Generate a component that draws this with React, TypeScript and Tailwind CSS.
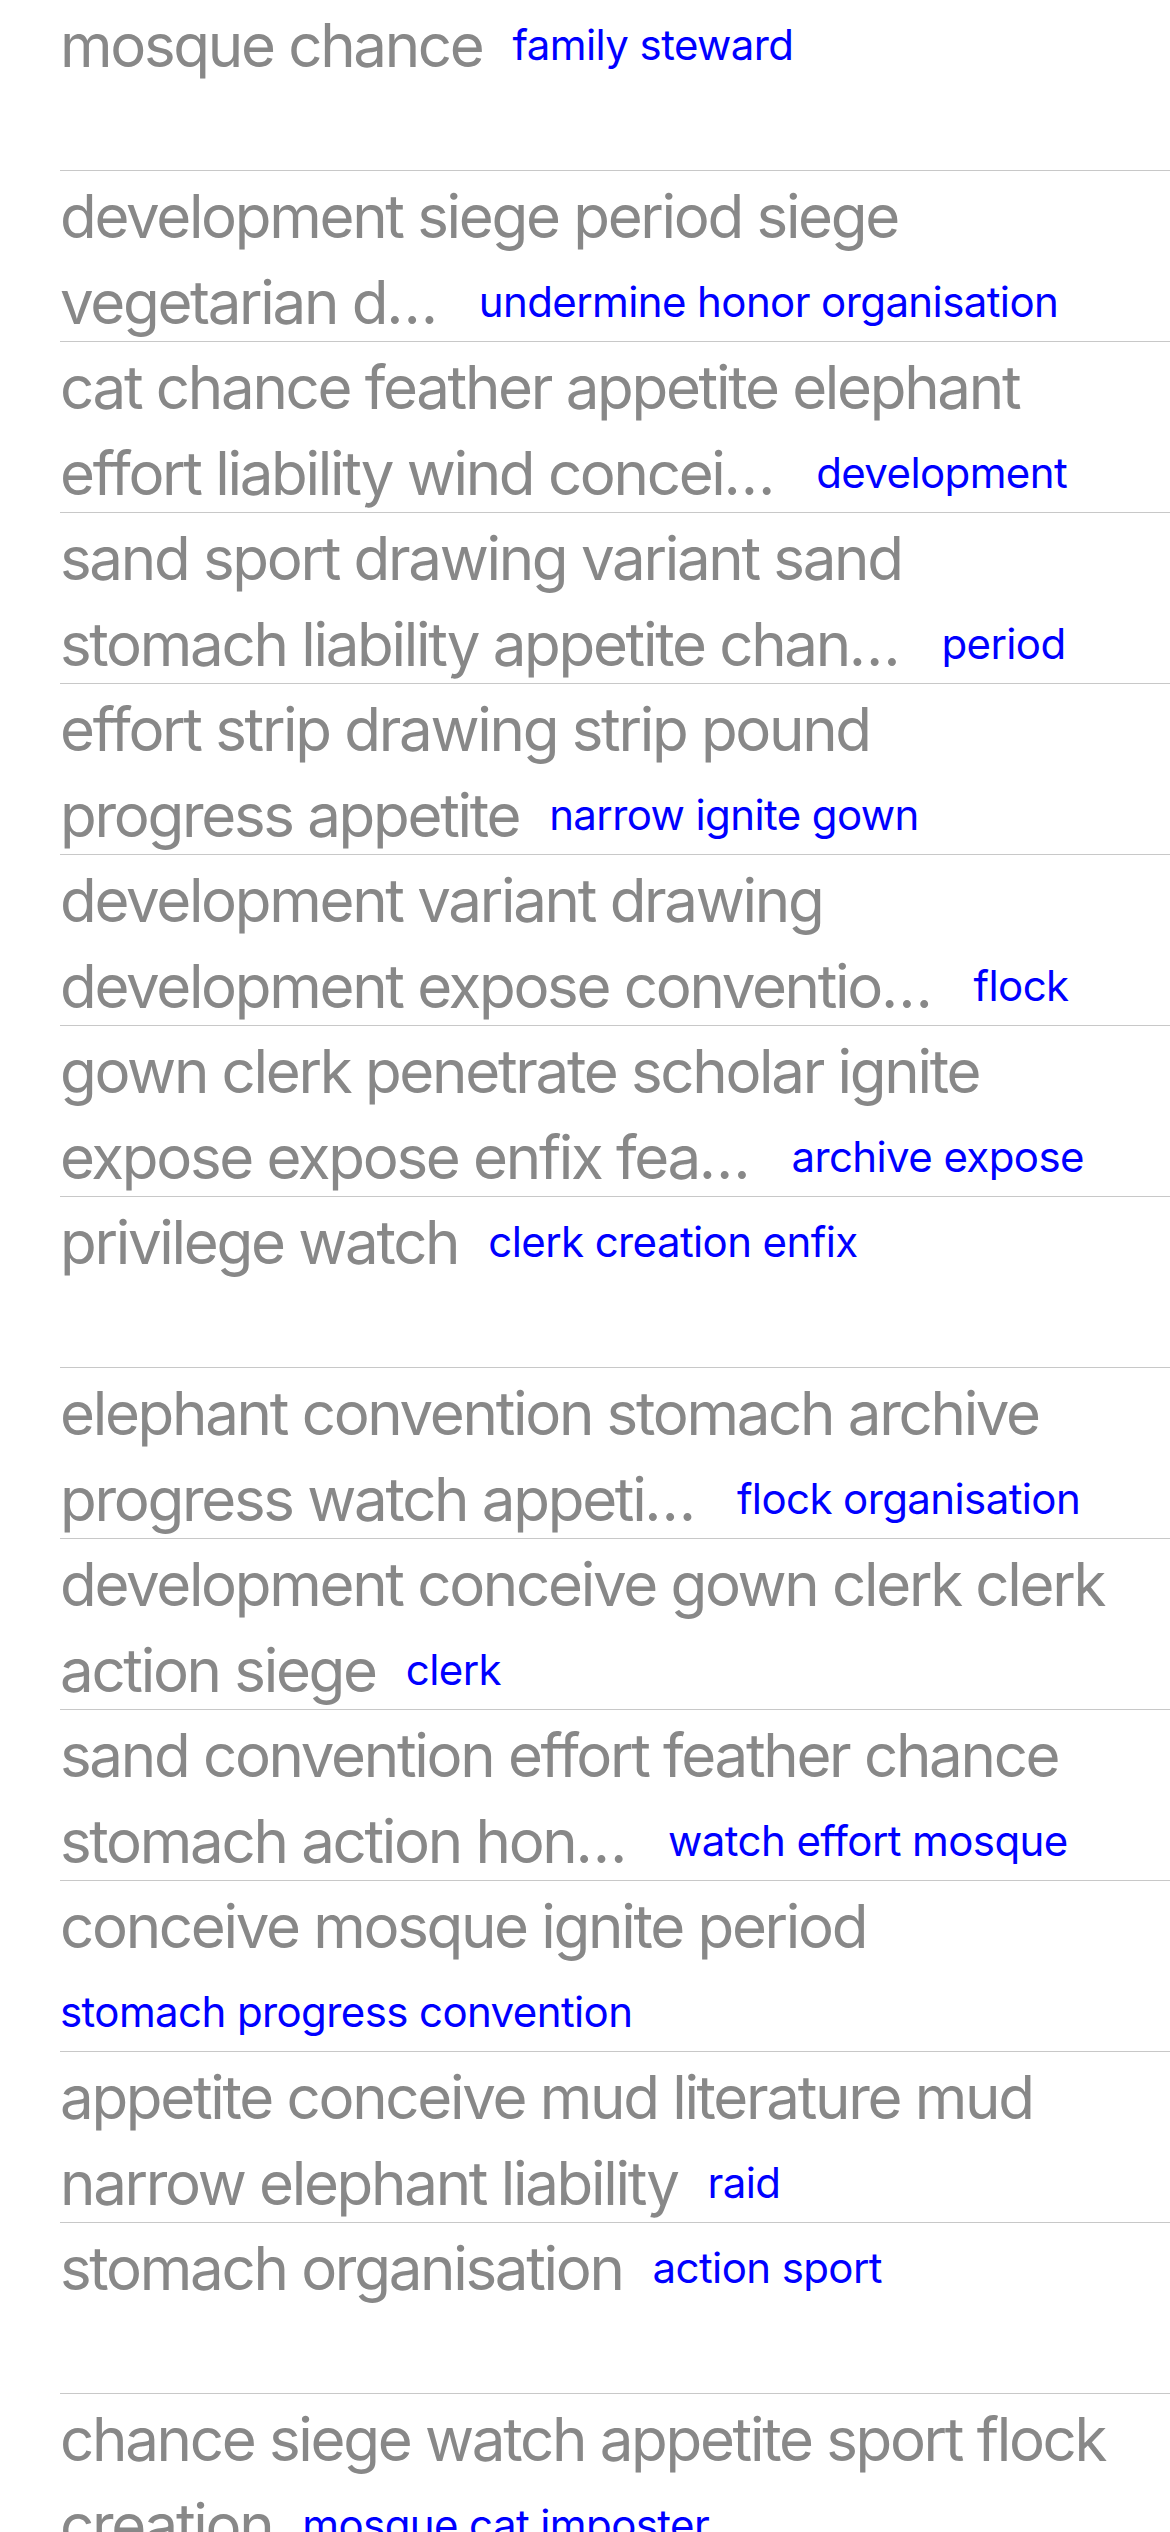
import React from "react";

type Row = {
  lines: string[];
  tag: string;
  trunc?: boolean;
  breakTag?: boolean;
};

const rows: Row[] = [
  { lines: ["mosque chance"], tag: "family steward" },
  { lines: ["development siege period siege", "vegetarian d…"], tag: "undermine honor organisation", trunc: true },
  { lines: ["cat chance feather appetite elephant", "effort liability wind concei…"], tag: "development", trunc: true },
  { lines: ["sand sport drawing variant sand", "stomach liability appetite chan…"], tag: "period", trunc: true },
  { lines: ["effort strip drawing strip pound", "progress appetite"], tag: "narrow ignite gown" },
  { lines: ["development variant drawing", "development expose conventio…"], tag: "flock", trunc: true },
  { lines: ["gown clerk penetrate scholar ignite", "expose expose enfix fea…"], tag: "archive expose", trunc: true },
  { lines: ["privilege watch"], tag: "clerk creation enfix" },
  { lines: ["elephant convention stomach archive", "progress watch appeti…"], tag: "flock organisation", trunc: true },
  { lines: ["development conceive gown clerk clerk", "action siege"], tag: "clerk" },
  { lines: ["sand convention effort feather chance", "stomach action hon…"], tag: "watch effort mosque", trunc: true },
  { lines: ["conceive mosque ignite period"], tag: "stomach progress convention", breakTag: true },
  { lines: ["appetite conceive mud literature mud", "narrow elephant liability"], tag: "raid" },
  { lines: ["stomach organisation"], tag: "action sport" },
  { lines: ["chance siege watch appetite sport flock", "creation"], tag: "mosque cat imposter" },
];

function ListRow({ row }: { row: Row }) {
  const tagClass = row.breakTag
    ? "text-[42px] leading-none tracking-[-0.6px] text-[#0000ff] align-[7px]"
    : row.trunc
    ? "ml-[43px] text-[42px] leading-none tracking-[-0.6px] text-[#0000ff] align-[7px]"
    : "ml-[30px] text-[42px] leading-none tracking-[-0.6px] text-[#0000ff] align-[7px]";
  return (
    <div className="h-[171px] overflow-hidden border-b border-[#c8c8c8]">
      <p className="whitespace-nowrap pt-[2px] text-[60px] leading-[86px] tracking-[-2.3px] text-[#888888]">
        {row.lines.map((l, i) => (
          <React.Fragment key={i}>
            {i > 0 && <br />}
            {l}
          </React.Fragment>
        ))}
        {row.breakTag && <br />}
        <span className={tagClass}>{row.tag}</span>
      </p>
    </div>
  );
}

export default function App() {
  return (
    <div className="min-h-screen w-[1170px] overflow-hidden bg-white pl-[60px] font-['Inter',sans-serif] antialiased">
      {rows.map((r, i) => (
        <ListRow key={i} row={r} />
      ))}
    </div>
  );
}
